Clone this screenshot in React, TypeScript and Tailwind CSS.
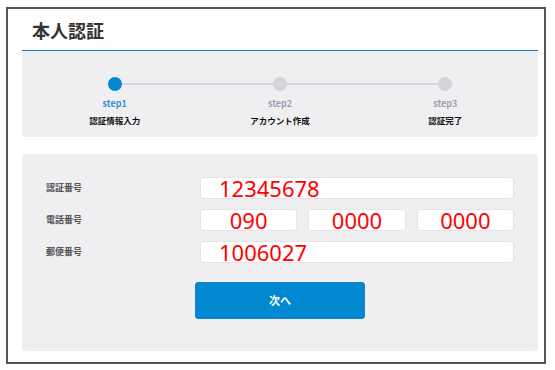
import React from 'react';

const jp = { fontFamily: '"Noto Sans CJK JP", "Noto Sans", sans-serif' };
const num = { fontFamily: '"Noto Sans", "Open Sans", sans-serif' };

const steps = [
  { no: 'step1', label: '認証情報入力', active: true },
  { no: 'step2', label: 'アカウント作成', active: false },
  { no: 'step3', label: '認証完了', active: false },
];

const Field: React.FC<{ value: string; center?: boolean }> = ({ value, center }) => (
  <div
    className={`h-[22px] bg-white border border-[#e4e4e6] rounded-[3px] flex items-center ${
      center ? 'justify-center' : 'pl-[18px]'
    }`}
  >
    <span className="text-[22px] leading-[22px] text-[#ff0000] whitespace-nowrap" style={num}>
      {value}
    </span>
  </div>
);

export default function App() {
  return (
    <div className="w-[555px] h-[370px] bg-white pt-[7px] pl-[6px]" style={jp}>
      <div className="w-[540px] h-[357px] border-2 border-[#555555] pl-[14px] pr-[6px] flex flex-col">
        <div className="h-[42px] border-b border-[#0a8ad2] flex items-center pl-[10px] shrink-0">
          <h1 className="text-[18px] font-bold text-[#333333] leading-none">本人認証</h1>
        </div>

        <div className="h-[86px] bg-[#efeff1] px-[10px] pt-[26px] shrink-0">
          <div className="relative grid grid-cols-3">
            <div className="absolute left-[82px] right-[82px] top-[6px] h-[2px] bg-[#d6d6da]" />
            {steps.map((s) => (
              <div key={s.no} className="relative flex flex-col items-center">
                <div
                  className={`w-[14px] h-[14px] rounded-full ${s.active ? 'bg-[#0288d1]' : 'bg-[#d4d4d9]'}`}
                />
                <div
                  className={`mt-[7px] text-[9px] font-bold leading-[12px] ${
                    s.active ? 'text-[#3b8ed0]' : 'text-[#9aa1b3]'
                  }`}
                >
                  {s.no}
                </div>
                <div className="mt-[4px] text-[8.5px] font-bold leading-[12px] text-[#111111]">{s.label}</div>
              </div>
            ))}
          </div>
        </div>

        <div className="mt-[17px] h-[197px] bg-[#efeff1] rounded-[3px] px-[24px] pt-[23px] shrink-0">
          <div className="flex flex-col gap-[10px]">
            <div className="flex items-center">
              <div className="w-[154px] text-[9px] font-bold text-[#555555]">認証番号</div>
              <div className="flex-1">
                <Field value="12345678" />
              </div>
            </div>
            <div className="flex items-center">
              <div className="w-[154px] text-[9px] font-bold text-[#555555]">電話番号</div>
              <div className="flex-1 grid grid-cols-3 gap-[11px]">
                <Field value="090" center />
                <Field value="0000" center />
                <Field value="0000" center />
              </div>
            </div>
            <div className="flex items-center">
              <div className="w-[154px] text-[9px] font-bold text-[#555555]">郵便番号</div>
              <div className="flex-1">
                <Field value="1006027" />
              </div>
            </div>
          </div>
          <div className="flex justify-center mt-[19px]">
            <button className="w-[170px] h-[37px] bg-[#0288d1] border border-[#1a7fc0] rounded-[3px] text-white text-[11px] font-bold">
              次へ
            </button>
          </div>
        </div>
      </div>
    </div>
  );
}
